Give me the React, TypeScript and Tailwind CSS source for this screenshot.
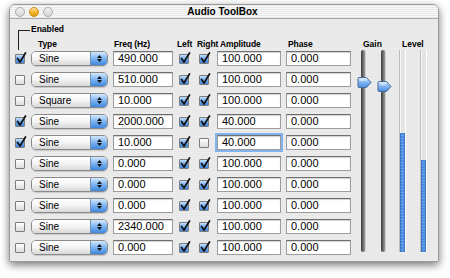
import React from 'react';

type Row = {
  enabled: boolean;
  type: string;
  freq: string;
  left: boolean;
  right: boolean;
  amp: string;
  phase: string;
  focus?: boolean;
};

const rows: Row[] = [
  { enabled: true, type: 'Sine', freq: '490.000', left: true, right: true, amp: '100.000', phase: '0.000' },
  { enabled: false, type: 'Sine', freq: '510.000', left: true, right: true, amp: '100.000', phase: '0.000' },
  { enabled: false, type: 'Square', freq: '10.000', left: true, right: true, amp: '100.000', phase: '0.000' },
  { enabled: true, type: 'Sine', freq: '2000.000', left: true, right: true, amp: '40.000', phase: '0.000' },
  { enabled: true, type: 'Sine', freq: '10.000', left: true, right: false, amp: '40.000', phase: '0.000', focus: true },
  { enabled: false, type: 'Sine', freq: '0.000', left: true, right: true, amp: '100.000', phase: '0.000' },
  { enabled: false, type: 'Sine', freq: '0.000', left: true, right: true, amp: '100.000', phase: '0.000' },
  { enabled: false, type: 'Sine', freq: '0.000', left: true, right: true, amp: '100.000', phase: '0.000' },
  { enabled: false, type: 'Sine', freq: '2340.000', left: true, right: true, amp: '100.000', phase: '0.000' },
  { enabled: false, type: 'Sine', freq: '0.000', left: true, right: true, amp: '100.000', phase: '0.000' },
];

const Check = ({ on, className = '' }: { on: boolean; className?: string }) => (
  <div
    className={`relative w-[10px] h-[10px] shrink-0 rounded-[1px] border border-[#7c7c7c] ${
      on
        ? 'bg-gradient-to-b from-[#c6e0fb] via-[#6fa8ec] to-[#3f86dc]'
        : 'bg-gradient-to-b from-[#ffffff] to-[#dcdcdc]'
    } ${className}`}
  >
    {on && (
      <svg className="absolute -top-[3px] left-[0px]" width="11" height="12" viewBox="0 0 11 12">
        <path d="M1.5 6.5 L4 10 L9.5 1" fill="none" stroke="#111" strokeWidth="1.7" strokeLinecap="round" strokeLinejoin="round" />
      </svg>
    )}
  </div>
);

const Popup = ({ label }: { label: string }) => (
  <div className="w-[77px] h-[15px] shrink-0 flex rounded-[5px] border border-[#8a8a8a] overflow-hidden shadow-[0_1px_1px_rgba(0,0,0,0.15)]">
    <div className="flex-1 bg-gradient-to-b from-[#ffffff] via-[#f4f4f4] to-[#d8d8d8] text-[10px] leading-[13px] pl-[7px] text-black">
      {label}
    </div>
    <div className="w-[17px] border-l border-[#6d8fb8] bg-gradient-to-b from-[#d4e8fc] via-[#7db4f0] to-[#3d86de] flex flex-col items-center justify-center gap-[1px]">
      <svg width="5" height="3" viewBox="0 0 5 3"><path d="M0 3 L2.5 0 L5 3 Z" fill="#111" /></svg>
      <svg width="5" height="3" viewBox="0 0 5 3"><path d="M0 0 L2.5 3 L5 0 Z" fill="#111" /></svg>
    </div>
  </div>
);

const Field = ({ value, w, focus }: { value: string; w: string; focus?: boolean }) => (
  <div
    className={`${w} h-[15px] shrink-0 bg-white border border-[#9c9c9c] border-t-[#6e6e6e] shadow-[inset_0_1px_1px_rgba(0,0,0,0.18)] text-[11px] leading-[13px] pl-[4px] text-black ${
      focus ? 'outline outline-[2px] outline-[#82b3ee]' : ''
    }`}
  >
    {value}
  </div>
);

const Thumb = ({ top }: { top: string }) => (
  <svg className={`absolute -left-[4px] ${top}`} width="15" height="11" viewBox="0 0 15 11">
    <defs>
      <linearGradient id="tg" x1="0" y1="0" x2="0" y2="1">
        <stop offset="0" stopColor="#e0eefd" />
        <stop offset="0.5" stopColor="#7fb4f0" />
        <stop offset="1" stopColor="#4a8ce0" />
      </linearGradient>
    </defs>
    <path d="M1 1.5 Q1 0.5 2 0.5 H9.5 L14 5.5 L9.5 10.5 H2 Q1 10.5 1 9.5 Z" fill="url(#tg)" stroke="#4a6d99" strokeWidth="1" />
    <path d="M3 3 H9" stroke="#ffffff" strokeOpacity="0.6" strokeWidth="1" />
  </svg>
);

const GainTrack = ({ top }: { top: string }) => (
  <div className="relative w-[4px] h-full rounded-full bg-gradient-to-r from-[#3a3a3a] via-[#6a6a6a] to-[#9a9a9a] shadow-[1px_0_0_#cfcfcf]">
    <Thumb top={top} />
  </div>
);

const LevelTrack = ({ fill }: { fill: string }) => (
  <div className="w-[7px] h-full flex flex-col justify-end bg-[#e4e4e4] border-x border-l-[#bdbdbd] border-r-[#ffffff] shadow-[inset_1px_0_0_#f8f8f8]">
    <div className={`${fill} w-full bg-[repeating-linear-gradient(0deg,#4a8be0_0px,#4a8be0_2px,#6ea3ea_2px,#6ea3ea_3px)] border-x border-[#3b76c8]`} />
  </div>
);

export default function App() {
  return (
    <div className="w-[450px] h-[278px] bg-white pt-[4px] pl-[9px] font-['Liberation_Sans',Arial,sans-serif] text-black">
      <div className="w-[430px] h-[258px] flex flex-col rounded-t-[6px] border border-[#9a9a9a] bg-[repeating-linear-gradient(0deg,#ececec_0px,#ececec_1px,#e7e7e7_1px,#e7e7e7_2px)] shadow-[0_3px_9px_rgba(0,0,0,0.55)] overflow-hidden">
        {/* title bar */}
        <div className="h-[14px] shrink-0 flex items-center relative border-b border-[#a8a8a8] bg-[repeating-linear-gradient(0deg,#e9e9e9_0px,#e9e9e9_1px,#f7f7f7_1px,#f7f7f7_2px)]">
          <div className="flex items-center gap-[4px] pl-[5px]">
            <div className="w-[10px] h-[10px] rounded-full border border-[#a9a9a9] bg-gradient-to-b from-[#f2f2f2] to-[#d6d6d6]" />
            <div className="w-[10px] h-[10px] rounded-full border border-[#c88a10] bg-gradient-to-b from-[#fde5a0] via-[#f6b52a] to-[#e59b12]" />
            <div className="w-[10px] h-[10px] rounded-full border border-[#a9a9a9] bg-gradient-to-b from-[#f2f2f2] to-[#d6d6d6]" />
          </div>
          <div className="flex-1 text-center text-[10px] font-bold leading-[14px] pr-[46px]">Audio ToolBox</div>
        </div>

        {/* content */}
        <div className="flex-1 flex">
          {/* table */}
          <div className="w-[341px] flex flex-col">
            <div className="h-[20px] flex items-start pl-[8px]">
              <div className="mt-[11px] w-[12px] h-[20px] border-l border-t border-[#222]" />
              <div className="ml-[1px] mt-[5px] text-[8.5px] leading-[10px] font-bold">Enabled</div>
            </div>
            <div className="h-[9px] flex pl-[28px] text-[8.5px] leading-[10px] font-bold whitespace-nowrap tracking-[-0.1px]">
              <div className="w-[76px]">Type</div>
              <div className="w-[63px]">Freq (Hz)</div>
              <div className="w-[20px]">Left</div>
              <div className="w-[23px]">Right</div>
              <div className="w-[68px]">Amplitude</div>
              <div>Phase</div>
            </div>
            {rows.map((r, i) => (
              <div key={i} className="h-[21px] flex items-center pl-[5px]">
                <Check on={r.enabled} />
                <div className="ml-[6px]"><Popup label={r.type} /></div>
                <div className="ml-[5px]"><Field value={r.freq} w="w-[60px]" /></div>
                <Check on={r.left} className="ml-[6px]" />
                <Check on={r.right} className="ml-[10px]" />
                <div className="ml-[8px]"><Field value={r.amp} w="w-[64px]" focus={r.focus} /></div>
                <div className="ml-[5px]"><Field value={r.phase} w="w-[65px]" /></div>
              </div>
            ))}
          </div>

          {/* gain / level */}
          <div className="flex flex-col">
            <div className="h-[20px]" />
            <div className="h-[9px] flex pl-[12px] text-[8.5px] leading-[10px] font-bold">
              <div className="w-[39px]">Gain</div>
              <div>Level</div>
            </div>
            <div className="mt-[2px] h-[202px] flex">
              <div className="ml-[10px]"><GainTrack top="top-[27px]" /></div>
              <div className="ml-[16px]"><GainTrack top="top-[31px]" /></div>
              <div className="ml-[14px]"><LevelTrack fill="h-[119px]" /></div>
              <div className="ml-[14px]"><LevelTrack fill="h-[92px]" /></div>
            </div>
          </div>
        </div>
      </div>
    </div>
  );
}
